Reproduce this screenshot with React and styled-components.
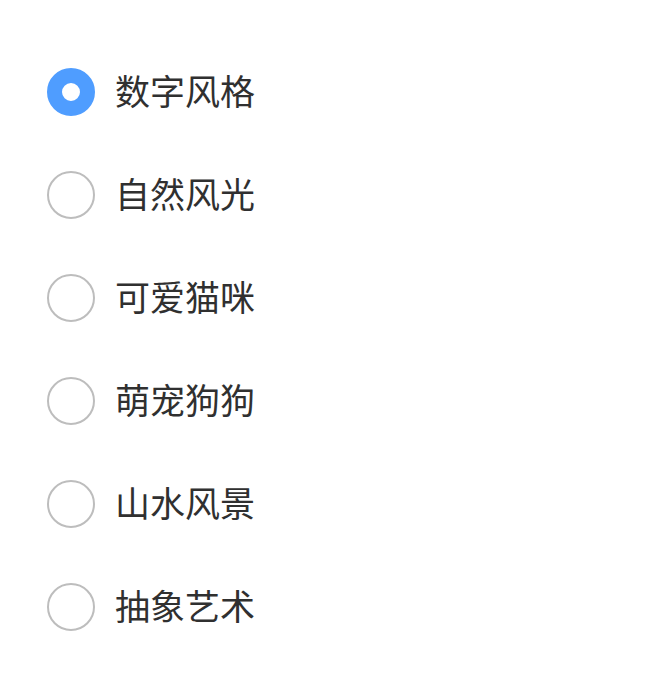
import React, { useState } from 'react';
import styled, { createGlobalStyle } from 'styled-components';

const GlobalStyle = createGlobalStyle`
  html, body {
    margin: 0;
    padding: 0;
    background: #ffffff;
  }
  body {
    font-family: "Noto Sans CJK SC", "Noto Sans", sans-serif;
  }
`;

const List = styled.div`
  display: flex;
  flex-direction: column;
  padding: 40px 0 0 47px;
`;

const Option = styled.label`
  display: flex;
  align-items: center;
  gap: 20px;
  height: 103px;
  cursor: pointer;
`;

const Circle = styled.span`
  box-sizing: border-box;
  width: 48px;
  height: 48px;
  border-radius: 50%;
  flex-shrink: 0;
  background: #ffffff;
  border: ${p => (p.$checked ? '15px solid #4f9dff' : '2px solid #bdbdbd')};
`;

const Label = styled.span`
  font-size: 35px;
  color: #303030;
  line-height: 1;
  margin-top: -4px;
`;

const options = ['数字风格', '自然风光', '可爱猫咪', '萌宠狗狗', '山水风景', '抽象艺术'];

export default function App() {
  const [selected, setSelected] = useState(0);
  return (
    <>
      <GlobalStyle />
      <List>
        {options.map((text, i) => (
          <Option key={text} onClick={() => setSelected(i)}>
            <Circle $checked={selected === i} />
            <Label>{text}</Label>
          </Option>
        ))}
      </List>
    </>
  );
}
